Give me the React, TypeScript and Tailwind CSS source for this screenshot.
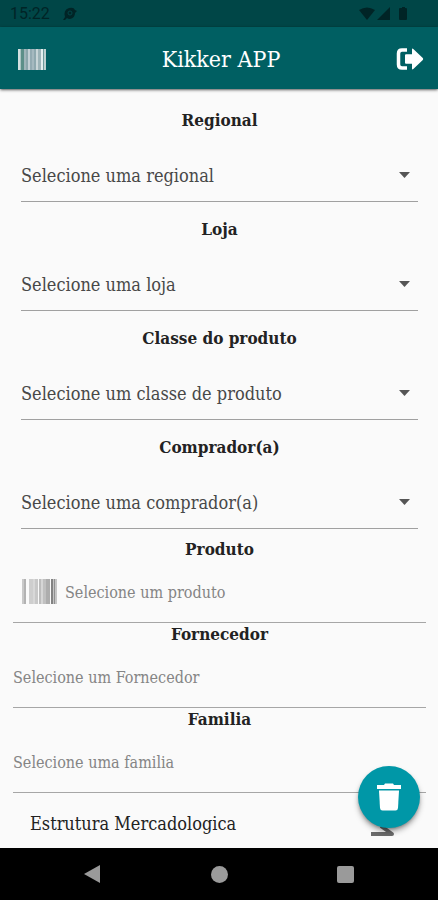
import React from "react";

type Bar = [x: number, width: number, fill: string];

const selects = [
  { id: "regional", label: "Regional", text: "Selecione uma regional" },
  { id: "loja", label: "Loja", text: "Selecione uma loja" },
  { id: "classe", label: "Classe do produto", text: "Selecione um classe de produto" },
  { id: "comprador", label: "Comprador(a)", text: "Selecione uma comprador(a)" },
];

const labelStyle = "block h-[22px] text-center text-[17px] leading-[22px] font-bold text-[#222222]";
const inputStyle =
  "h-full min-w-0 flex-1 bg-transparent pt-[2px] text-base text-[#222222] placeholder-[#858585] outline-none";

const headerBars: Bar[] = [
  [0, 2, "#d3e0e0"],
  [2, 1, "#a9c4c2"],
  [3, 3, "#5c8f88"],
  [6, 2, "#9fb5b9"],
  [8, 2, "#8ba6ab"],
  [10, 2, "#c3d0d5"],
  [12, 2, "#93abb2"],
  [14, 2, "#a5b9bf"],
  [16, 2, "#8fa9af"],
  [18, 2, "#c9d6d8"],
  [20, 3, "#9db4b8"],
  [23, 2, "#e4efef"],
  [25, 1, "#6d9a9b"],
  [26, 2, "#bdd0d0"],
];

const productBars: Bar[] = [
  [0, 2, "#c9c9c9"],
  [2, 2, "#b2b2b2"],
  [7, 4, "#cecece"],
  [11, 2, "#d8d8d8"],
  [13, 3, "#c8c8c8"],
  [17, 2, "#bdbdbd"],
  [19, 2, "#d6d6d6"],
  [21, 3, "#c0c0c0"],
  [24, 4, "#adadad"],
  [29, 2, "#828282"],
  [31, 1, "#c4c4c4"],
  [32, 1, "#8f8f8f"],
  [33, 2, "#c6c6c6"],
];

const Barcode = ({ className, viewBox, bars }: { className: string; viewBox: string; bars: Bar[] }) => (
  <svg className={className} viewBox={viewBox} aria-hidden="true">
    {bars.map(([x, width, fill]) => (
      <rect key={x} x={x} width={width} height="25" fill={fill} />
    ))}
  </svg>
);

const StatusBar = () => (
  <div className="flex h-[27px] items-center justify-between bg-[#004647] pr-[30px] pl-[10px] text-[#002426]">
    <div className="flex items-center gap-3 font-[Roboto,sans-serif] text-base leading-[27px]">
      <span>15:22</span>
      <svg className="h-[14px] w-[16px]" viewBox="0 0 16 14" aria-hidden="true">
        <path d="M7 1q5-1 6 2l2 1-2 2q0 5-5 6-2 0-3-1l-2 2H1l2-3Q1 3 7 1z" fill="currentColor" />
        <circle cx="8" cy="6" r="2" fill="none" stroke="#004647" strokeWidth="1" />
      </svg>
    </div>
    <svg className="h-[14px] w-[50px]" viewBox="0 0 50 14" fill="currentColor" aria-hidden="true">
      <path d="M1 3q8-5 16 0L9 13z" />
      <path d="M32 0v13H19z" />
      <path d="M42 1h2V0h3v1h1q1 0 1 1v10q0 1-1 1h-6q-1 0-1-1V2q0-1 1-1z" />
    </svg>
  </div>
);

const Header = () => (
  <header className="relative z-10 flex h-[62px] items-center justify-between bg-[#005f62] px-[18px] pt-[2px] shadow-sm shadow-black/50">
    <button type="button" aria-label="Ler código de barras">
      <Barcode className="h-[21px] w-[28px]" viewBox="0 0 28 21" bars={headerBars} />
    </button>
    <h1 className="text-[23px] leading-[28px] font-medium text-white">Kikker APP</h1>
    <button type="button" aria-label="Sair" className="-mr-1">
      <svg className="h-[22px] w-[28px]" viewBox="0 0 28 22" aria-hidden="true">
        <path
          d="M11 2H6Q2.500 2 2.500 5.500v11Q2.500 20 6 20h5"
          fill="none"
          stroke="white"
          strokeWidth="3.500"
        />
        <path
          d="M9 7.200q0-1 1-1h6V1.500q0-1.500 1.300-.5l9.500 9q.8 1 0 2l-9.500 9q-1.300 1-1.300-.5v-4.700h-6q-1 0-1-1z"
          fill="white"
        />
      </svg>
    </button>
  </header>
);

const Line = ({ id, label, text, icon }: { id: string; label: string; text: string; icon?: React.ReactNode }) => (
  <div>
    <label htmlFor={id} className={labelStyle}>
      {label}
    </label>
    <div className="flex h-[63px] items-center gap-2 border-b border-[#a6a6a6]">
      {icon}
      <input id={id} type="text" placeholder={text} className={inputStyle} />
    </div>
  </div>
);

const App: React.FC = () => {
  return (
    <div className="flex min-h-screen flex-col bg-[#fafafa] font-['DejaVu_Serif_Condensed','DejaVu_Serif',serif]">
      <StatusBar />
      <Header />
      <main className="relative flex flex-1 flex-col pt-1">
        <div className="pr-5 pl-[21px]">
          {selects.map((item) => (
            <div key={item.id} className="pt-4">
              <label htmlFor={item.id} className={labelStyle}>
                {item.label}
              </label>
              <div className="relative mt-[17px]">
                <select
                  id={item.id}
                  className="h-[54px] w-full appearance-none border-b border-[#a0a0a0] bg-transparent pt-[2px] pr-8 text-lg text-[#484848] outline-none"
                >
                  <option>{item.text}</option>
                </select>
                <svg
                  className="pointer-events-none absolute top-6 right-2 h-[6px] w-[11px]"
                  viewBox="0 0 11 6"
                  aria-hidden="true"
                >
                  <path d="M0 0h11L5.500 6z" fill="#555555" />
                </svg>
              </div>
            </div>
          ))}
        </div>
        <div className="mt-[9px] px-3 pl-[13px]">
          <Line
            id="produto"
            label="Produto"
            text="Selecione um produto"
            icon={<Barcode className="ml-[9px] h-[25px] w-[35px]" viewBox="0 0 35 25" bars={productBars} />}
          />
          <Line id="fornecedor" label="Fornecedor" text="Selecione um Fornecedor" />
          <Line id="familia" label="Familia" text="Selecione uma familia" />
        </div>
        <div className="flex items-start justify-between pt-5 pr-11 pl-[30px]">
          <span className="text-lg leading-[22px] text-[#222222]">Estrutura Mercadologica</span>
          <svg className="mt-1 h-[20px] w-[23px]" viewBox="0 0 23 20" aria-hidden="true">
            <path
              d="M0 17h21L10 9"
              fill="none"
              stroke="#6b6b6b"
              strokeWidth="4"
              strokeLinejoin="round"
            />
          </svg>
        </div>
        <button
          type="button"
          aria-label="Limpar"
          className="absolute right-[18px] bottom-5 flex size-[62px] items-center justify-center rounded-full bg-[#0097a7] shadow-md shadow-black/40"
        >
          <svg className="h-[28px] w-[26px]" viewBox="0 0 26 28" fill="white" aria-hidden="true">
            <path d="M1 2h7l1-1.500h8L18 2h7v4H1z" />
            <path d="M3 7.500h20l-1 17.500q-.2 2.500-2.500 2.500h-13Q4.200 27.500 4 25z" />
          </svg>
        </button>
      </main>
      <nav className="flex h-[52px] items-center justify-between bg-black px-[84px]">
        <button type="button" aria-label="Voltar">
          <svg className="h-[18px] w-[17px]" viewBox="0 0 17 18" aria-hidden="true">
            <path d="M16 0v18L0 9z" fill="#9a9a9a" />
          </svg>
        </button>
        <button type="button" aria-label="Início" className="size-[17px] rounded-full bg-[#9a9a9a]" />
        <button type="button" aria-label="Recentes" className="size-[17px] rounded-xs bg-[#9a9a9a]" />
      </nav>
    </div>
  );
};

export default App;
